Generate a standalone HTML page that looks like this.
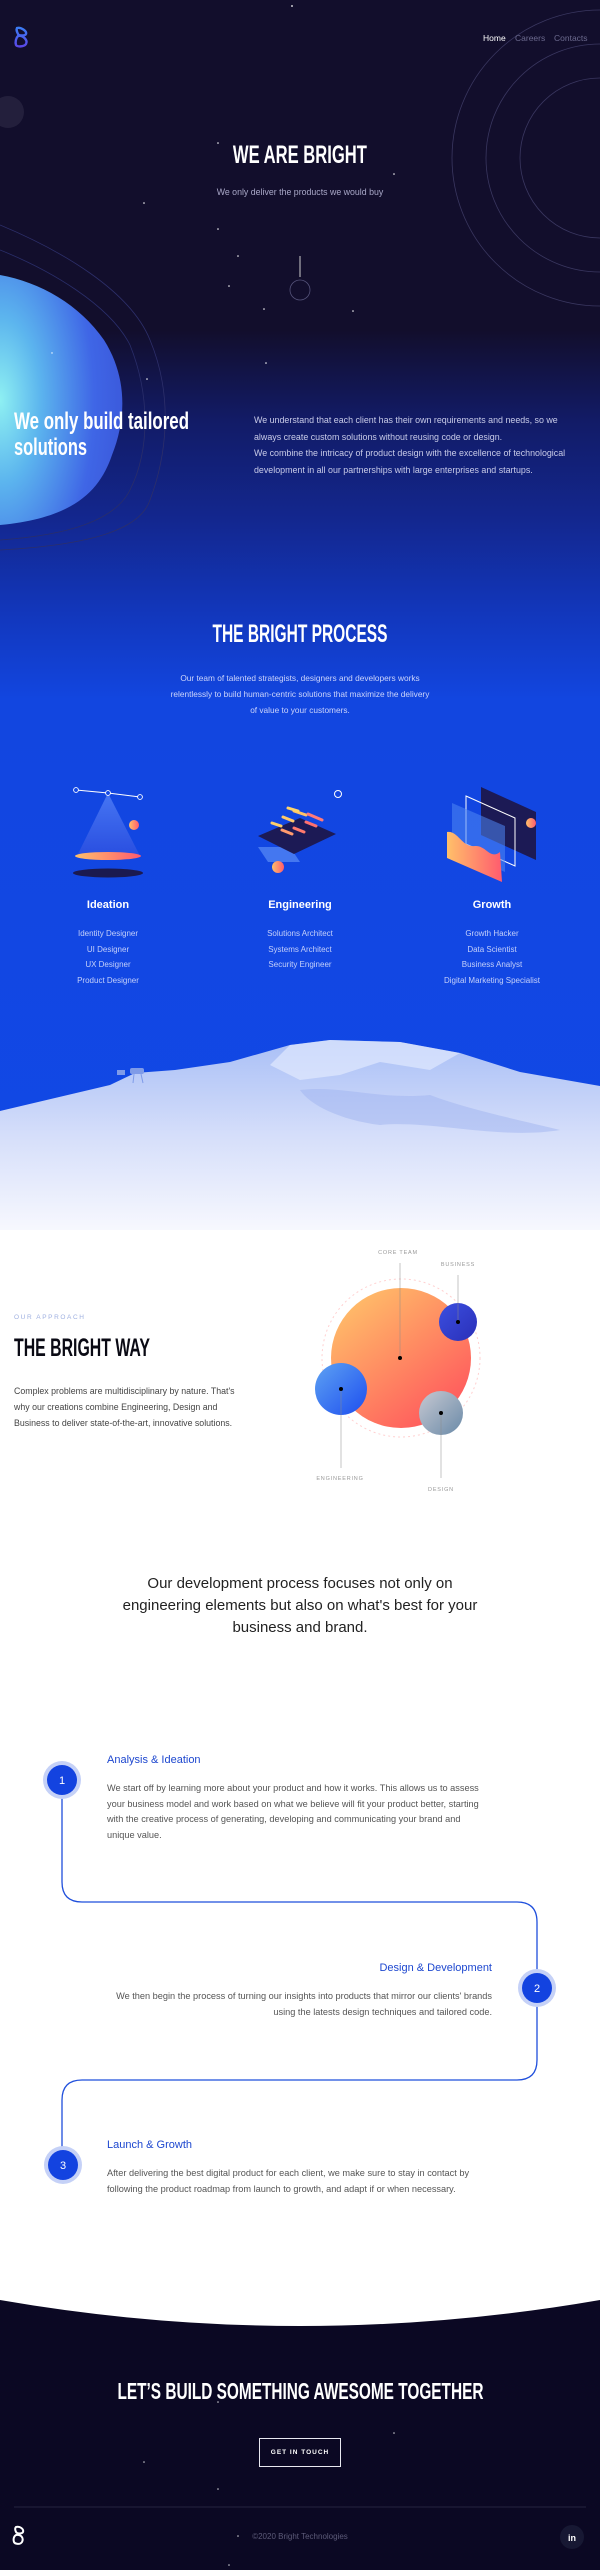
<!DOCTYPE html>
<html><head><meta charset="utf-8">
<style>
*{margin:0;padding:0;box-sizing:border-box}
body{width:600px;height:2570px;position:relative;overflow:hidden;background:#fff;font-family:"Liberation Sans",sans-serif}
.a{position:absolute}
.h{font-family:"Liberation Sans Narrow","Liberation Sans",sans-serif;font-weight:bold;white-space:nowrap;display:inline-block;transform-origin:0 0;line-height:1}
.p{font-size:8.6px;white-space:nowrap}
.c{text-align:center}
</style></head><body>
<div class="a" style="left:0;top:0;width:600px;height:1230px;background:linear-gradient(180deg,#120e2c 0px,#120e2c 330px,#121b66 420px,#13278f 520px,#1238bf 620px,#1246e0 700px,#1148e6 1230px)"></div>
<svg class="a" style="left:0;top:0" width="600" height="1230">
<defs>
<radialGradient id="bl" cx="0" cy="0.5" r="1.1"><stop offset="0" stop-color="#8ef0f2"/><stop offset="0.3" stop-color="#5cb5ee"/><stop offset="0.7" stop-color="#3f66e6"/><stop offset="1" stop-color="#3a55d8"/></radialGradient>
<linearGradient id="og" x1="0" y1="0" x2="1" y2="0"><stop offset="0" stop-color="#ffc06a"/><stop offset="1" stop-color="#ff5b6e"/></linearGradient>
<linearGradient id="tri" x1="0" y1="0" x2="0" y2="1"><stop offset="0" stop-color="#4c7bf5"/><stop offset="1" stop-color="#2c4fe0"/></linearGradient>
<linearGradient id="mt" x1="0" y1="0" x2="0" y2="1"><stop offset="0" stop-color="#a9bff6"/><stop offset="0.5" stop-color="#d5defa"/><stop offset="1" stop-color="#f7f8fe"/></linearGradient>
<linearGradient id="lg" x1="0" y1="0" x2="0" y2="1"><stop offset="0" stop-color="#3b7cf5"/><stop offset="1" stop-color="#5a48e6"/></linearGradient>
</defs>
<g fill="none" stroke="#3a3760" stroke-width="0.8"><circle cx="600" cy="158" r="148"/><circle cx="600" cy="158" r="114"/><circle cx="600" cy="158" r="80"/></g>
<circle cx="8" cy="112" r="16" fill="#3a3650" opacity="0.45"/>
<path d="M0,225 C60,250 130,290 150,340 C175,400 165,460 150,500 C140,530 90,545 0,550" fill="none" stroke="#2d2f6a" stroke-width="0.8"/>
<path d="M0,250 C50,270 110,305 130,345 C150,395 150,450 130,490 C115,520 70,535 0,540" fill="none" stroke="#2a2e6a" stroke-width="0.8"/>
<path d="M0,275 C40,282 80,305 104,340 C128,378 126,420 112,455 C100,490 75,518 0,525 Z" fill="url(#bl)"/>
<g fill="#fff"><circle cx="292" cy="6" r="0.9"/><circle cx="218" cy="143" r="0.8"/><circle cx="394" cy="174" r="0.8"/><circle cx="144" cy="203" r="0.8"/><circle cx="218" cy="229" r="0.8"/><circle cx="238" cy="256" r="0.8"/><circle cx="229" cy="286" r="0.8"/><circle cx="264" cy="309" r="0.8"/><circle cx="353" cy="311" r="0.8"/><circle cx="266" cy="363" r="0.8"/><circle cx="147" cy="379" r="0.8"/><circle cx="52" cy="353" r="0.7"/></g>
<line x1="300" y1="256" x2="300" y2="277" stroke="#ccc" stroke-width="1"/><circle cx="300" cy="290" r="10" fill="none" stroke="#55537a" stroke-width="0.8"/>
<path d="M17,28 C21,27 27,31 26,34 C25,36 19,36 18,34 C17,32 16,30 17,28 Z M18,36 C23,35 28,40 26,44 C24,47 17,47 16,45 C15,42 16,38 18,36 Z" fill="none" stroke="url(#lg)" stroke-width="2.4"/>
<line x1="76" y1="790" x2="108" y2="793" stroke="#fff" stroke-width="0.9"/><line x1="108" y1="793" x2="140" y2="797" stroke="#fff" stroke-width="0.9"/>
<path d="M108,793 L77,856 L140,856 Z" fill="url(#tri)" opacity="0.9"/>
<g fill="#1148e6" stroke="#fff" stroke-width="0.9"><circle cx="76" cy="790" r="2.4"/><circle cx="108" cy="793" r="2.4"/><circle cx="140" cy="797" r="2.4"/></g>
<ellipse cx="108" cy="873" rx="35" ry="4.5" fill="#1b1a50"/>
<ellipse cx="108" cy="856" rx="33" ry="4" fill="url(#og)"/>
<circle cx="134" cy="825" r="5" fill="url(#og)"/>
<path d="M258,847 L290,847 L300,862 L268,862 Z" fill="#5a8cf6" opacity="0.7"/>
<path d="M258,836 L300,818 L336,834 L294,854 Z" fill="#1c1a55"/>
<g stroke-width="3" stroke-linecap="round"><line x1="272" y1="823" x2="281" y2="826" stroke="#ffcf6a"/><line x1="283" y1="817" x2="293" y2="821" stroke="#ffc86a"/><line x1="294" y1="811" x2="306" y2="815" stroke="#ffc36a"/><line x1="294" y1="828" x2="304" y2="832" stroke="#ff7a6e"/><line x1="306" y1="822" x2="316" y2="826" stroke="#ff7070"/><line x1="308" y1="814" x2="322" y2="820" stroke="#ff7a7a"/><line x1="282" y1="830" x2="292" y2="834" stroke="#ff9a6e"/><line x1="288" y1="808" x2="298" y2="811" stroke="#ffd46a"/></g>
<circle cx="278" cy="867" r="6" fill="url(#og)"/>
<circle cx="338" cy="794" r="3.5" fill="none" stroke="#fff" stroke-width="1"/>
<path d="M481,787 L536,812 L536,860 L481,835 Z" fill="#1c1a55"/>
<path d="M466,796 L515,818 L515,866 L466,844 Z" fill="none" stroke="#fff" stroke-width="1"/>
<path d="M452,803 L505,826 L505,872 L452,849 Z" fill="#4e86f4" opacity="0.55"/>
<path d="M447,832 C458,830 462,848 475,846 C486,845 490,860 500,852 L502,882 L447,858 Z" fill="url(#og)"/>
<circle cx="531" cy="823" r="5" fill="url(#og)"/>
<path d="M0,1111 L110,1085 L135,1073 L175,1070 L230,1062 L290,1045 L330,1040 L400,1042 L460,1053 L520,1072 L600,1086 L600,1230 L0,1230 Z" fill="url(#mt)"/>
<path d="M290,1045 L330,1040 L400,1042 L460,1053 L430,1070 L380,1062 L340,1075 L300,1080 L270,1065 Z" fill="#e8eeff" opacity="0.6"/>
<path d="M300,1090 C340,1085 380,1100 430,1095 C470,1110 520,1120 560,1130 C500,1140 430,1120 380,1125 C340,1120 310,1105 300,1090 Z" fill="#9fb4ef" opacity="0.5"/>
<g fill="#7f9be8"><rect x="130" y="1068" width="14" height="6" rx="2"/><rect x="117" y="1070" width="8" height="5"/><line x1="134" y1="1074" x2="133" y2="1083" stroke="#7f9be8"/><line x1="141" y1="1074" x2="143" y2="1083" stroke="#7f9be8"/></g>
</svg>
<div class="a p" style="left:483px;top:33px;color:#fff;font-size:8.5px">Home</div>
<div class="a p" style="left:515px;top:33px;color:#6c6a8e;font-size:8.5px">Careers</div>
<div class="a p" style="left:554px;top:33px;color:#6c6a8e;font-size:8.5px">Contacts</div>
<div class="a c" style="left:0;width:600px;top:143px"><span class="h fit" style="font-size:25px;color:#fff;--w:134">WE ARE BRIGHT</span></div>
<div class="a p c" style="left:0;width:600px;top:187px;color:#a9a8c8;font-size:8.8px">We only deliver the products we would buy</div>
<div class="a" style="left:14px;top:410px"><span class="h fit" style="font-size:24px;color:#fff;--w:175">We only build tailored</span></div>
<div class="a" style="left:14px;top:436px"><span class="h fit" style="font-size:24px;color:#fff;--w:73">solutions</span></div>
<div class="a p" style="left:254px;top:412px;color:#c8cbe8;line-height:16.5px;font-size:8.9px">We understand that each client has their own requirements and needs, so we<br>always create custom solutions without reusing code or design.<br>We combine the intricacy of product design with the excellence of technological<br>development in all our partnerships with large enterprises and startups.</div>
<div class="a c" style="left:0;width:600px;top:622px"><span class="h fit" style="font-size:25px;color:#fff;--w:175">THE BRIGHT PROCESS</span></div>
<div class="a p c" style="left:0;width:600px;top:670px;color:#cdd5fb;line-height:16px;font-size:8.3px">Our team of talented strategists, designers and developers works<br>relentlessly to build human-centric solutions that maximize the delivery<br>of value to your customers.</div>
<div class="a c" style="left:28px;width:160px;top:899px;color:#fff;font-weight:bold;font-size:11px">Ideation</div>
<div class="a c" style="left:220px;width:160px;top:899px;color:#fff;font-weight:bold;font-size:11px">Engineering</div>
<div class="a c" style="left:412px;width:160px;top:899px;color:#fff;font-weight:bold;font-size:11px">Growth</div>
<div class="a p c" style="left:28px;width:160px;top:926px;color:#c5d0fa;line-height:15.5px;font-size:8px">Identity Designer<br>UI Designer<br>UX Designer<br>Product Designer</div>
<div class="a p c" style="left:220px;width:160px;top:926px;color:#c5d0fa;line-height:15.5px;font-size:8px">Solutions Architect<br>Systems Architect<br>Security Engineer</div>
<div class="a p c" style="left:412px;width:160px;top:926px;color:#c5d0fa;line-height:15.5px;font-size:8px">Growth Hacker<br>Data Scientist<br>Business Analyst<br>Digital Marketing Specialist</div>
<div class="a p" style="left:14px;top:1314px;color:#9fb0e0;font-size:6.5px;letter-spacing:1.6px">OUR APPROACH</div>
<div class="a" style="left:14px;top:1336px"><span class="h fit" style="font-size:25px;color:#0a0a14;--w:136">THE BRIGHT WAY</span></div>
<div class="a p" style="left:14px;top:1383px;color:#444;line-height:16px;font-size:8.8px">Complex problems are multidisciplinary by nature. That's<br>why our creations combine Engineering, Design and<br>Business to deliver state-of-the-art, innovative solutions.</div>
<svg class="a" style="left:300px;top:1240px" width="220" height="260">
<defs>
<linearGradient id="bg1" x1="0.1" y1="0" x2="0.9" y2="1"><stop offset="0" stop-color="#ffc56a"/><stop offset="0.5" stop-color="#ff8a62"/><stop offset="1" stop-color="#ff4f5c"/></linearGradient>
<linearGradient id="bb" x1="0" y1="0" x2="1" y2="1"><stop offset="0" stop-color="#3b4fe0"/><stop offset="1" stop-color="#2a2fb8"/></linearGradient>
<linearGradient id="be" x1="0" y1="0" x2="1" y2="1"><stop offset="0" stop-color="#5ea2f2"/><stop offset="1" stop-color="#1d4ef0"/></linearGradient>
<linearGradient id="bd" x1="0" y1="0" x2="1" y2="1"><stop offset="0" stop-color="#c7c9d2"/><stop offset="1" stop-color="#6a8aa8"/></linearGradient>
</defs>
<circle cx="101" cy="118" r="79" fill="none" stroke="#ffd0d0" stroke-width="1" stroke-dasharray="2 3"/>
<circle cx="101" cy="118" r="70" fill="url(#bg1)"/>
<circle cx="158" cy="82" r="19" fill="url(#bb)"/>
<circle cx="41" cy="149" r="26" fill="url(#be)"/>
<circle cx="141" cy="173" r="22" fill="url(#bd)"/>
<g stroke="#8a8a8a" stroke-width="0.5"><line x1="100" y1="23" x2="100" y2="118"/><line x1="158" y1="35" x2="158" y2="82"/><line x1="41" y1="149" x2="41" y2="228"/><line x1="141" y1="173" x2="141" y2="238"/></g>
<g fill="#000"><circle cx="100" cy="118" r="2"/><circle cx="158" cy="82" r="2"/><circle cx="41" cy="149" r="2"/><circle cx="141" cy="173" r="2"/></g>
<g font-family="Liberation Sans" font-size="5.5" fill="#999" text-anchor="middle" letter-spacing="0.8"><text x="98" y="14">CORE TEAM</text><text x="158" y="26">BUSINESS</text><text x="40" y="240">ENGINEERING</text><text x="141" y="251">DESIGN</text></g>
</svg>
<div class="a c" style="left:0;width:600px;top:1573px;color:#222;font-size:15px;line-height:22px">Our development process focuses not only on<br>engineering elements but also on what's best for your<br>business and brand.</div>
<svg class="a" style="left:0;top:1740px" width="600" height="460">
<path d="M62,40 V142 Q62,162 82,162 H517 Q537,162 537,182 V320 Q537,340 517,340 H82 Q62,340 62,360 V425" fill="none" stroke="#1f4fdc" stroke-width="1.3"/>
<g><circle cx="62" cy="40" r="19" fill="#c5d1f7"/><circle cx="62" cy="40" r="15" fill="#1343e0"/>
<circle cx="537" cy="248" r="19" fill="#c5d1f7"/><circle cx="537" cy="248" r="15" fill="#1343e0"/>
<circle cx="63" cy="425" r="19" fill="#c5d1f7"/><circle cx="63" cy="425" r="15" fill="#1343e0"/></g>
<g font-family="Liberation Sans" font-size="11" fill="#fff" text-anchor="middle"><text x="62" y="44">1</text><text x="537" y="252">2</text><text x="63" y="429">3</text></g>
</svg>
<div class="a" style="left:107px;top:1754px;color:#1d47cf;font-size:11px">Analysis &amp; Ideation</div>
<div class="a p" style="left:107px;top:1781px;color:#555;line-height:15.7px;font-size:9.2px">We start off by learning more about your product and how it works. This allows us to assess<br>your business model and work based on what we believe will fit your product better, starting<br>with the creative process of generating, developing and communicating your brand and<br>unique value.</div>
<div class="a" style="right:108px;top:1962px;color:#1d47cf;font-size:11px">Design &amp; Development</div>
<div class="a p" style="right:108px;top:1989px;color:#555;line-height:15.7px;font-size:9.2px;text-align:right">We then begin the process of turning our insights into products that mirror our clients' brands<br>using the latests design techniques and tailored code.</div>
<div class="a" style="left:107px;top:2139px;color:#1d47cf;font-size:11px">Launch &amp; Growth</div>
<div class="a p" style="left:107px;top:2166px;color:#555;line-height:15.7px;font-size:9.2px">After delivering the best digital product for each client, we make sure to stay in contact by<br>following the product roadmap from launch to growth, and adapt if or when necessary.</div>
<div class="a" style="left:0;top:2285px;width:600px;height:285px;background:#0b0823"></div>
<svg class="a" style="left:0;top:2280px" width="600" height="290">
<path d="M0,0 H600 V20 Q300,72 0,20 Z" fill="#fff"/>
<g fill="#fff" opacity="0.8"><circle cx="218" cy="122" r="0.8"/><circle cx="394" cy="153" r="0.8"/><circle cx="144" cy="182" r="0.8"/><circle cx="218" cy="209" r="0.8"/><circle cx="238" cy="256" r="0.8"/><circle cx="229" cy="285" r="0.8"/></g>
<line x1="14" y1="227" x2="586" y2="227" stroke="#25233f" stroke-width="1"/>
<path d="M16,247 C20,246 24,249 23,252 C22,254 17,254 16,252 C15,250 15,248 16,247 Z M16,255 C21,254 24,258 22,262 C20,265 15,264 14,262 C13,259 14,256 16,255 Z" fill="none" stroke="#fff" stroke-width="2"/>
<circle cx="572" cy="257" r="12" fill="#171833"/>
<text x="572" y="261" font-family="Liberation Sans" font-weight="bold" font-size="9" fill="#fff" text-anchor="middle">in</text>
</svg>
<div class="a c" style="left:0;width:600px;top:2380px"><span class="h fit" style="font-size:23px;color:#fff;--w:366">LET’S BUILD SOMETHING AWESOME TOGETHER</span></div>
<div class="a c" style="left:259px;top:2438px;width:82px;height:29px;border:1px solid #e8e8f0;color:#fff;font-size:6.5px;letter-spacing:1px;line-height:27px;font-weight:bold">GET IN TOUCH</div>
<div class="a p c" style="left:200px;width:200px;top:2532px;color:#5c5a78;font-size:8px">©2020 Bright Technologies</div>
<script>
document.querySelectorAll('.fit').forEach(function(e){var w=parseFloat(getComputedStyle(e).getPropertyValue('--w'));var a=e.getBoundingClientRect().width;if(w&&a){var s=w/a;e.style.transform='scaleX('+s+')';var p=e.parentNode;if(p.classList.contains('c')){e.style.transformOrigin='50% 0';}}});
</script>
</body></html>
